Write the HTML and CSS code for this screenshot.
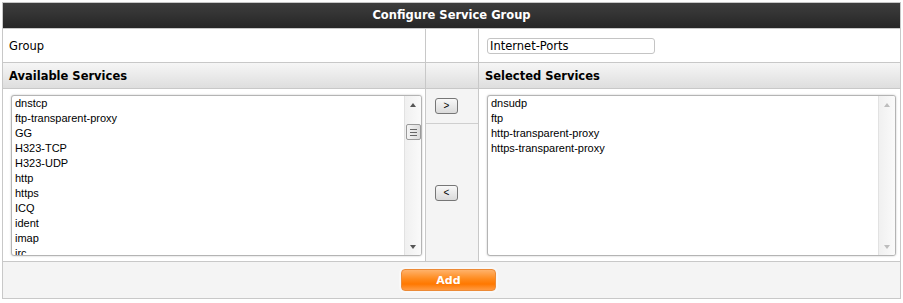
FILE: index.html
```html
<!DOCTYPE html>
<html lang="en">
<head>
  <meta charset="UTF-8" />
  <title>Configure Service Group</title>
  <link rel="stylesheet" href="styles.css">
</head>
<body>

  <div class="panel">
    <div class="panel-title">Configure Service Group</div>

    <div class="row group-row">
      <div class="cell label">Group</div>
      <div class="cell mid"></div>
      <div class="cell right">
        <input type="text" class="group-name" value="Internet-Ports">
      </div>
    </div>

    <div class="row head-row">
      <div class="cell">Available Services</div>
      <div class="cell mid"></div>
      <div class="cell right">Selected Services</div>
    </div>

    <div class="row list-row">
      <div class="cell list-cell left">
        <div class="listbox">
          <div class="options" id="available"></div>
          <div class="scrollbar">
            <span class="arrow up"></span>
            <span class="thumb"><i></i><i></i><i></i></span>
            <span class="spacer"></span>
            <span class="arrow down"></span>
          </div>
        </div>
      </div>
      <div class="cell mid move">
        <div class="move-top"><button class="move-btn">&gt;</button></div>
        <div class="move-bottom"><button class="move-btn">&lt;</button></div>
      </div>
      <div class="cell list-cell right">
        <div class="listbox">
          <div class="options" id="selected"></div>
          <div class="scrollbar disabled">
            <span class="arrow up"></span>
            <span class="spacer"></span>
            <span class="arrow down"></span>
          </div>
        </div>
      </div>
    </div>

    <div class="row footer-row">
      <button class="add-btn">Add</button>
    </div>
  </div>

  <script>
    const available = ["dnstcp", "ftp-transparent-proxy", "GG", "H323-TCP", "H323-UDP", "http", "https", "ICQ", "ident", "imap", "irc"];
    const selected = ["dnsudp", "ftp", "http-transparent-proxy", "https-transparent-proxy"];

    function fillList(id, items) {
      document.getElementById(id).innerHTML = items.map(name => `<div class="option">${name}</div>`).join('');
    }

    fillList("available", available);
    fillList("selected", selected);
  </script>
</body>
</html>
```

FILE: styles.css
```css
* {
  box-sizing: border-box;
}

body {
  margin: 2px;
  font-family: "DejaVu Sans", Verdana, sans-serif;
  font-size: 11.5px;
  color: #000;
  background: #fff;
}

.panel {
  width: 899px;
  border: 1px solid #c8c8c8;
}

.panel-title {
  height: 25px;
  line-height: 25px;
  text-align: center;
  color: #fff;
  font-weight: bold;
  background: linear-gradient(#3e3e3e, #262626);
}

.row {
  display: grid;
  grid-template-columns: 422px 54px 421px;
  border-top: 1px solid #c8c8c8;
}

.cell {
  padding: 0 6px;
  display: flex;
  align-items: center;
}

.mid {
  border-left: 1px solid #c8c8c8;
  border-right: 1px solid #c8c8c8;
}

.group-row {
  height: 34px;
}

.group-name {
  width: 168px;
  height: 16px;
  margin-left: 2px;
  padding: 0 2px;
  border: 1px solid #c4c4c4;
  border-radius: 3px;
  font-family: "DejaVu Sans", Verdana, sans-serif;
  font-size: 11.5px;
  color: #000;
  outline: none;
}

.head-row {
  height: 26px;
  font-weight: bold;
  background: linear-gradient(#f6f6f6, #dedede);
}

.list-row {
  height: 173px;
}

.list-cell {
  display: block;
  padding: 6px 3px 5px 8px;
}

.list-cell.right {
  padding-right: 4px;
}

.listbox {
  display: flex;
  height: 161px;
  border: 1px solid #b4b4b4;
  border-radius: 3px;
  box-shadow: 0 0 2px rgba(0, 0, 0, 0.25);
  background: #fff;
  overflow: hidden;
}

.options {
  flex: 1;
  padding: 0 3px;
  overflow: hidden;
  font-family: "Liberation Sans", Arial, sans-serif;
  font-size: 11px;
}

.option {
  height: 15px;
  line-height: 15px;
  white-space: nowrap;
}

.scrollbar {
  width: 17px;
  display: flex;
  flex-direction: column;
  align-items: center;
  border-left: 1px solid #e2e2e2;
  background: linear-gradient(90deg, #f0f0f0, #fafafa);
}

.arrow {
  height: 17px;
  width: 100%;
  display: flex;
  align-items: center;
  justify-content: center;
}

.arrow::after {
  content: "";
  border-left: 3.5px solid transparent;
  border-right: 3.5px solid transparent;
}

.arrow.up::after {
  border-bottom: 4px solid #555;
}

.arrow.down::after {
  border-top: 4px solid #555;
}

.disabled .arrow.up::after {
  border-bottom-color: #bdbdbd;
}

.disabled .arrow.down::after {
  border-top-color: #bdbdbd;
}

.spacer {
  flex: 1;
}

.thumb {
  width: 15px;
  height: 16px;
  margin-top: 11px;
  border: 1px solid #9a9a9a;
  border-radius: 2px;
  background: linear-gradient(90deg, #f4f4f4, #dcdcdc);
  display: flex;
  flex-direction: column;
  align-items: center;
  justify-content: center;
  gap: 2px;
}

.thumb i {
  display: block;
  width: 7px;
  height: 1px;
  background: #666;
}

.move {
  display: flex;
  flex-direction: column;
  align-items: stretch;
  padding: 0;
  background: #f4f4f4;
}

.move-top {
  height: 35px;
  border-bottom: 1px solid #cfcfcf;
  display: flex;
  align-items: center;
  padding-left: 9px;
}

.move-bottom {
  flex: 1;
  display: flex;
  align-items: center;
  padding-left: 9px;
}

.move-btn {
  width: 23px;
  height: 16px;
  padding: 0;
  border: 1px solid #767676;
  border-radius: 3px;
  background: linear-gradient(#f8f8f8, #dadada);
  font-family: "Liberation Sans", Arial, sans-serif;
  font-size: 10px;
  line-height: 14px;
  color: #000;
}

.footer-row {
  display: flex;
  justify-content: center;
  align-items: center;
  height: 37px;
  background: #f4f4f4;
}

.add-btn {
  width: 95px;
  height: 22px;
  margin-left: -6px;
  padding: 0;
  border: 1px solid #ec8a36;
  border-radius: 4px;
  background: linear-gradient(#ffb26a, #ff8a1c 45%, #ff7800 70%, #ff9a42);
  box-shadow: 0 0 0 2px #f8f8f8;
  color: #fff;
  font-family: "DejaVu Sans", Verdana, sans-serif;
  font-size: 11px;
  font-weight: bold;
}
```
